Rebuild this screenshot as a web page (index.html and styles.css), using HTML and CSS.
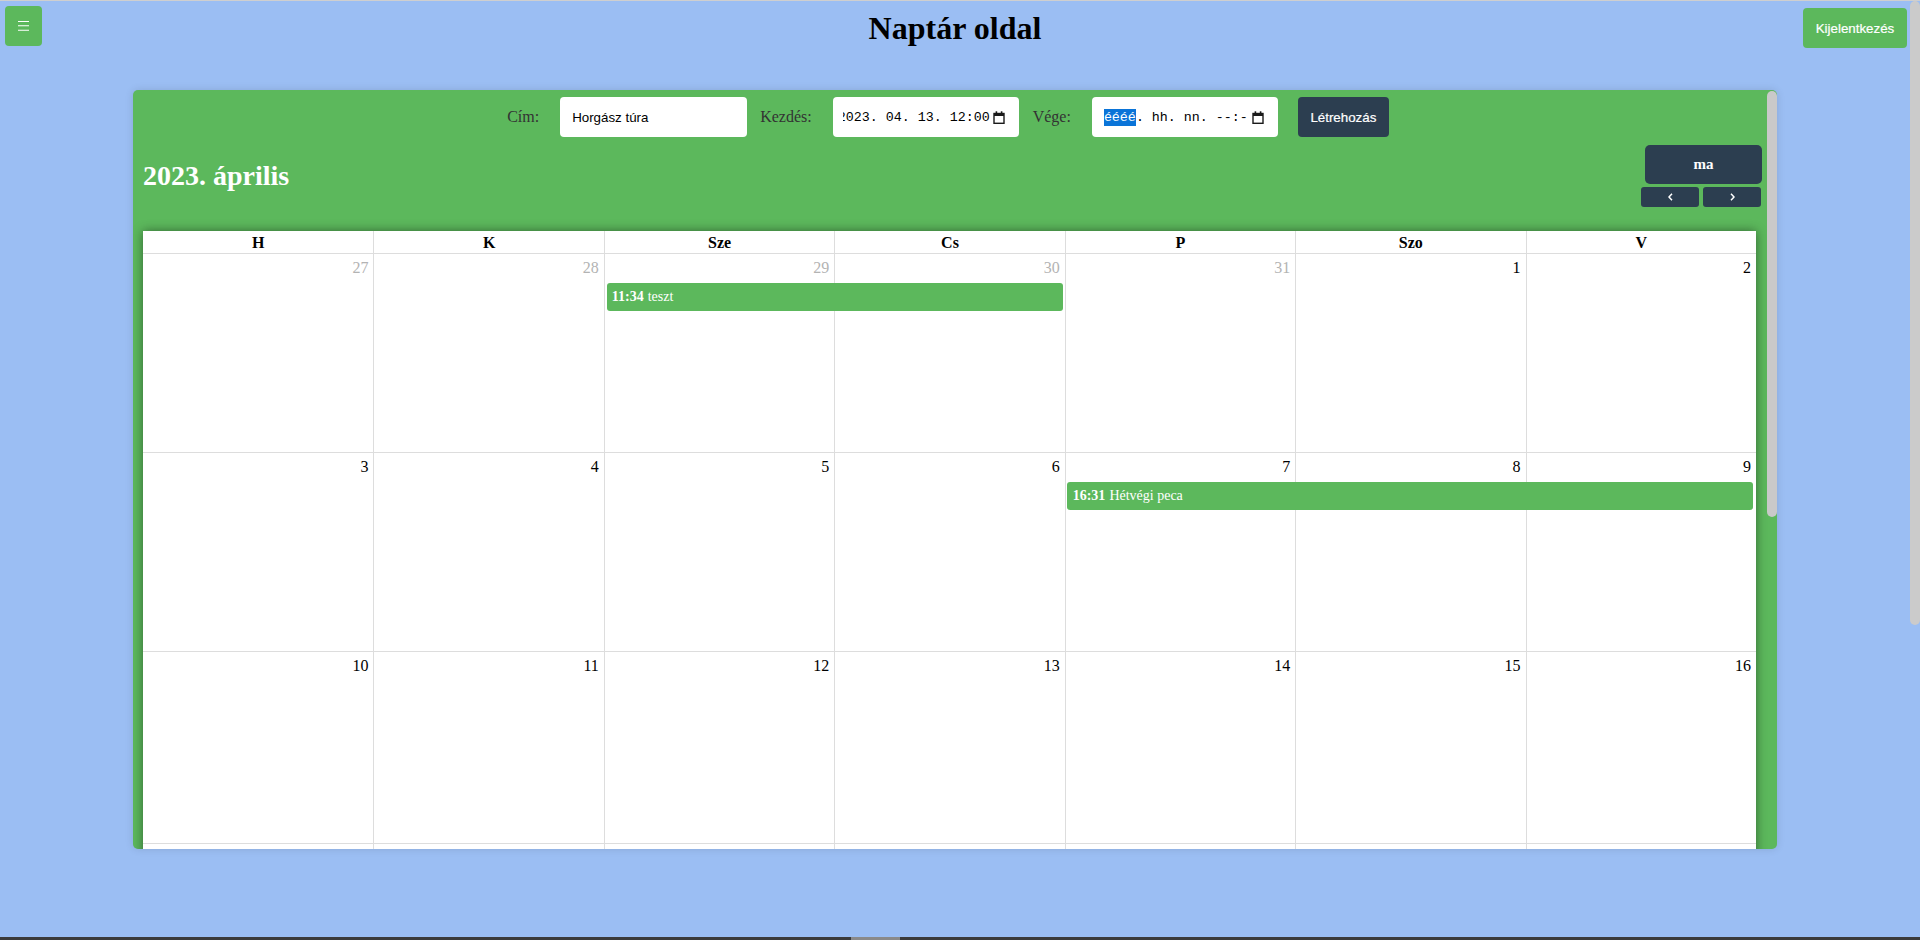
FILE: index.html
```html
<!DOCTYPE html>
<html lang="hu">
<head>
<meta charset="utf-8">
<title>Naptár oldal</title>
<link rel="stylesheet" href="styles.css">
</head>
<body>
<div class="page">
  <header class="topbar">
    <button class="menu-btn" type="button" aria-label="Menü">
      <svg width="11" height="10" viewBox="0 0 11 10"><path d="M0 0.5h11M0 4.8h11M0 9.3h11" stroke="#fff" stroke-width="1.1"/></svg>
    </button>
    <h1 class="page-title">Naptár oldal</h1>
    <button class="logout-btn" type="button">Kijelentkezés</button>
  </header>

  <main class="calendar-card">
    <form class="event-form">
      <label class="field-label">Cím:</label>
      <input class="text-input" type="text" value="Horgász túra">
      <label class="field-label">Kezdés:</label>
      <div class="date-input">
        <div class="date-text date-text--end"><span>2023. 04. 13. 12:00</span></div>
        <svg class="cal-icon" width="12" height="13" viewBox="0 0 12 13"><rect x="1" y="2.5" width="10" height="9.8" fill="none" stroke="#1a1a1a" stroke-width="1.4"/><rect x="1" y="2" width="10" height="3" fill="#1a1a1a"/><rect x="2.6" y="0.3" width="1.6" height="2.4" fill="#1a1a1a"/><rect x="7.8" y="0.3" width="1.6" height="2.4" fill="#1a1a1a"/></svg>
      </div>
      <label class="field-label">Vége:</label>
      <div class="date-input date-input--last">
        <div class="date-text"><span><span class="sel">éééé</span>. hh. nn. --:--</span></div>
        <svg class="cal-icon" width="12" height="13" viewBox="0 0 12 13"><rect x="1" y="2.5" width="10" height="9.8" fill="none" stroke="#1a1a1a" stroke-width="1.4"/><rect x="1" y="2" width="10" height="3" fill="#1a1a1a"/><rect x="2.6" y="0.3" width="1.6" height="2.4" fill="#1a1a1a"/><rect x="7.8" y="0.3" width="1.6" height="2.4" fill="#1a1a1a"/></svg>
      </div>
      <button class="create-btn" type="button">Létrehozás</button>
    </form>

    <div class="toolbar">
      <h2 class="month-title">2023. április</h2>
      <div class="toolbar-right">
        <button class="today-btn" type="button">ma</button>
        <div class="nav-group">
          <button class="nav-btn" type="button" aria-label="előző"><svg width="5" height="8" viewBox="0 0 5 8"><path d="M4 0.8L1 4l3 3.2" fill="none" stroke="#fff" stroke-width="1.5"/></svg></button>
          <button class="nav-btn" type="button" aria-label="következő"><svg width="5" height="8" viewBox="0 0 5 8"><path d="M1 0.8L4 4 1 7.2" fill="none" stroke="#fff" stroke-width="1.5"/></svg></button>
        </div>
      </div>
    </div>

    <div class="month-grid">
      <div class="dow-row">
        <div class="dow">H</div><div class="dow">K</div><div class="dow">Sze</div><div class="dow">Cs</div><div class="dow">P</div><div class="dow">Szo</div><div class="dow">V</div>
      </div>

      <div class="week">
        <div class="day other"><div class="day-num">27</div></div>
        <div class="day other"><div class="day-num">28</div></div>
        <div class="day other"><div class="day-num">29</div></div>
        <div class="day other"><div class="day-num">30</div></div>
        <div class="day other"><div class="day-num">31</div></div>
        <div class="day"><div class="day-num">1</div></div>
        <div class="day"><div class="day-num">2</div></div>
        <div class="event event--c3s2"><span class="event-time">11:34</span><span>teszt</span></div>
      </div>

      <div class="week">
        <div class="day"><div class="day-num">3</div></div>
        <div class="day"><div class="day-num">4</div></div>
        <div class="day"><div class="day-num">5</div></div>
        <div class="day"><div class="day-num">6</div></div>
        <div class="day"><div class="day-num">7</div></div>
        <div class="day"><div class="day-num">8</div></div>
        <div class="day"><div class="day-num">9</div></div>
        <div class="event event--c5s3"><span class="event-time">16:31</span><span>Hétvégi peca</span></div>
      </div>

      <div class="week week--short">
        <div class="day"><div class="day-num">10</div></div>
        <div class="day"><div class="day-num">11</div></div>
        <div class="day"><div class="day-num">12</div></div>
        <div class="day"><div class="day-num">13</div></div>
        <div class="day"><div class="day-num">14</div></div>
        <div class="day"><div class="day-num">15</div></div>
        <div class="day"><div class="day-num">16</div></div>
      </div>

      <div class="week">
        <div class="day"><div class="day-num">17</div></div>
        <div class="day"><div class="day-num">18</div></div>
        <div class="day"><div class="day-num">19</div></div>
        <div class="day"><div class="day-num">20</div></div>
        <div class="day"><div class="day-num">21</div></div>
        <div class="day"><div class="day-num">22</div></div>
        <div class="day"><div class="day-num">23</div></div>
      </div>

      <div class="week">
        <div class="day"><div class="day-num">24</div></div>
        <div class="day"><div class="day-num">25</div></div>
        <div class="day"><div class="day-num">26</div></div>
        <div class="day"><div class="day-num">27</div></div>
        <div class="day"><div class="day-num">28</div></div>
        <div class="day"><div class="day-num">29</div></div>
        <div class="day"><div class="day-num">30</div></div>
      </div>
    </div>

    <div class="card-scroll-thumb"></div>
  </main>
</div>

<div class="top-line"></div>
<div class="page-scroll-thumb"></div>
<div class="bottom-bar"><div class="bottom-thumb"></div></div>
</body>
</html>
```

FILE: styles.css
```css
html, body {
  margin: 0;
  padding: 0;
}

body {
  background: #9bbef3;
  font-family: "Liberation Serif", "Times New Roman", serif;
  font-size: 16px;
  color: #000;
  height: 940px;
  overflow: hidden;
}

button {
  border: 0;
  padding: 0;
  margin: 0;
  cursor: pointer;
  font-family: "Liberation Sans", Arial, sans-serif;
  font-size: 13.333px;
}

.page {
  margin-right: 10px;
}

/* ---------- top bar ---------- */
.topbar {
  height: 90px;
  display: grid;
  grid-template-columns: 1fr auto 1fr;
  align-items: start;
}

.menu-btn {
  width: 37px;
  height: 40px;
  margin: 6px 0 0 5px;
  background: #5cb85c;
  border-radius: 4px;
  display: flex;
  align-items: center;
  justify-content: center;
  justify-self: start;
}

.page-title {
  margin: 10px 0 0;
  font-size: 32px;
  font-weight: bold;
  line-height: normal;
}

.logout-btn {
  justify-self: end;
  width: 104px;
  height: 40px;
  margin: 8px 3px 0 0;
  background: #5cb85c;
  color: #fff;
  border-radius: 4px;
  -webkit-text-stroke: 0.2px #fff;
}

/* ---------- card ---------- */
.calendar-card {
  position: relative;
  width: 1644px;
  height: 759px;
  margin: 0 auto;
  box-sizing: border-box;
  padding: 7px 10px 0 0;
  background: #5cb85c;
  border-radius: 5px;
  overflow: hidden;
  box-shadow: 0 0 8px rgba(0, 0, 0, 0.12);
}

.card-scroll-thumb {
  position: absolute;
  right: 0;
  top: 1px;
  width: 10px;
  height: 426px;
  background: #c9c9c9;
  border-radius: 5px;
}

/* ---------- form ---------- */
.event-form {
  display: flex;
  justify-content: center;
  align-items: center;
  height: 40px;
  padding-right: 4px;
  margin: 0;
}

.field-label {
  color: #333;
  margin-right: 21px;
  font-size: 16px;
}

.text-input {
  width: 187px;
  height: 40px;
  box-sizing: border-box;
  border: 0;
  border-radius: 4px;
  padding: 0 12px;
  margin: 0 13px 0 0;
  background: #fff;
  font-family: "Liberation Sans", Arial, sans-serif;
  font-size: 13.333px;
  color: #000;
  outline: none;
}

.date-input {
  width: 186px;
  height: 40px;
  box-sizing: border-box;
  padding: 0 13px 0 12px;
  margin-right: 14px;
  background: #fff;
  border-radius: 4px;
  display: flex;
  align-items: center;
}

.date-input--last {
  margin-right: 20px;
}

.date-text {
  width: 145px;
  flex: none;
  overflow: hidden;
  display: flex;
  justify-content: flex-start;
  white-space: nowrap;
  font-family: "Liberation Mono", "DejaVu Sans Mono", monospace;
  font-size: 13.333px;
  line-height: 17px;
  color: #000;
}

.date-text--end {
  justify-content: flex-end;
  width: 147px;
  margin-left: -2px;
}

.date-text > span {
  flex: none;
}

.sel {
  display: inline-block;
  background: #0a74d8;
  color: #fff;
  height: 17px;
}

.cal-icon {
  margin-left: 3px;
  flex: none;
}

.create-btn {
  width: 91px;
  height: 40px;
  background: #2c3e50;
  color: #fff;
  border-radius: 4px;
  -webkit-text-stroke: 0.2px #fff;
}

/* ---------- toolbar ---------- */
.toolbar {
  display: flex;
  justify-content: space-between;
  align-items: center;
  margin-top: 8px;
  padding: 0 5px 0 10px;
}

.month-title {
  margin: 0;
  font-size: 28px;
  font-weight: bold;
  color: #fff;
  line-height: normal;
}

.toolbar-right {
  display: flex;
  flex-direction: column;
  align-items: flex-end;
  gap: 3px;
}

.today-btn {
  width: 117px;
  height: 39px;
  background: #2c3e50;
  color: #fff;
  border-radius: 5px;
  font-family: "Liberation Serif", "Times New Roman", serif;
  font-size: 15px;
  font-weight: bold;
}

.nav-group {
  display: flex;
  gap: 4px;
  margin-right: 1px;
}

.nav-btn {
  width: 58px;
  height: 20px;
  background: #2c3e50;
  border-radius: 3px;
  display: flex;
  align-items: center;
  justify-content: center;
}

/* ---------- month grid ---------- */
.month-grid {
  margin: 24px 11px 0 10px;
  background: #fff;
  box-shadow: 0 0 10px rgba(0, 0, 0, 0.45);
}

.dow-row {
  display: grid;
  grid-template-columns: repeat(7, 1fr);
  border-bottom: 1px solid #ddd;
}

.dow {
  height: 22px;
  box-sizing: border-box;
  padding-top: 2px;
  line-height: 20px;
  text-align: center;
  font-weight: bold;
}

.dow + .dow {
  border-left: 1px solid #ddd;
}

.week {
  display: grid;
  grid-template-columns: repeat(7, 1fr);
  grid-template-rows: 29px 28px 1fr;
  height: 198px;
}

.week + .week {
  border-top: 1px solid #ddd;
}

.week--short {
  height: 191px;
}

.day {
  grid-row: 1 / -1;
}

.day:nth-child(1) { grid-column: 1; }
.day:nth-child(2) { grid-column: 2; }
.day:nth-child(3) { grid-column: 3; }
.day:nth-child(4) { grid-column: 4; }
.day:nth-child(5) { grid-column: 5; }
.day:nth-child(6) { grid-column: 6; }
.day:nth-child(7) { grid-column: 7; }

.day + .day {
  border-left: 1px solid #ddd;
}

.day-num {
  padding: 4px 5px 0 0;
  text-align: right;
  line-height: 20px;
}

.day.other .day-num {
  color: #b3b3b3;
}

.event {
  grid-row: 2;
  background: #5cb85c;
  color: #fff;
  border-radius: 3px;
  display: flex;
  align-items: center;
  padding-left: 5px;
  font-size: 14px;
  white-space: nowrap;
  overflow: hidden;
}

.event--c3s2 {
  grid-column: 3 / span 2;
  margin: 0 2px 0 3px;
}

.event--c5s3 {
  grid-column: 5 / span 3;
  margin: 0 3px 0 2px;
  padding-left: 6px;
}

.event-time {
  font-weight: bold;
  margin-right: 4px;
}

/* ---------- window chrome ---------- */
.top-line {
  position: fixed;
  left: 0;
  top: 0;
  width: 100%;
  height: 1px;
  background: #cfcfcf;
}

.page-scroll-thumb {
  position: fixed;
  right: 0;
  top: 1px;
  width: 10px;
  height: 624px;
  background: #cbcbcb;
  border-radius: 5px;
}

.bottom-bar {
  position: fixed;
  left: 0;
  bottom: 0;
  width: 100%;
  height: 3px;
  background: #3b3b3b;
}

.bottom-thumb {
  margin-left: 851px;
  width: 49px;
  height: 3px;
  background: #8a8a8a;
}
```
